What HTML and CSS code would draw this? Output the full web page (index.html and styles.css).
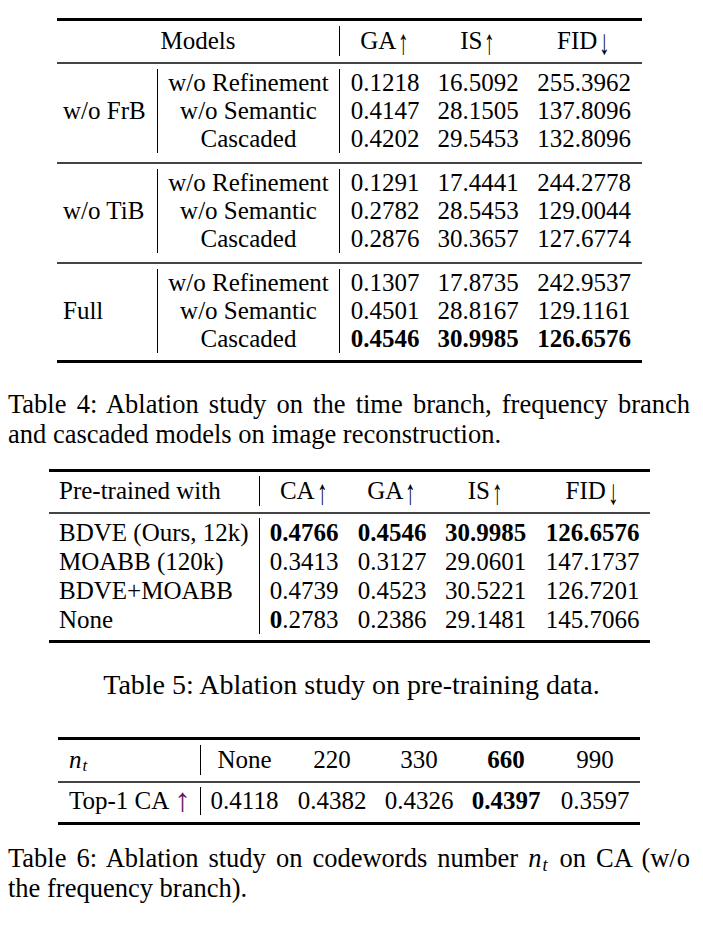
FILE: index.html
```html
<!DOCTYPE html>
<html>
<head>
<meta charset="utf-8">
<link rel="stylesheet" href="styles.css">
</head>
<body>
<div class="page">

  <div class="tbl t4">
    <div class="head g4">
      <div class="cell models vr">Models</div>
      <div class="cell">GA<span class="arr">↑</span></div>
      <div class="cell">IS<span class="arr">↑</span></div>
      <div class="cell">FID<span class="arr">↓</span></div>
    </div>
    <div class="grp g4">
      <div class="cell glabel vr">w/o FrB</div>
      <div class="cell vr">w/o Refinement</div><div class="cell">0.1218</div><div class="cell">16.5092</div><div class="cell">255.3962</div>
      <div class="cell vr">w/o Semantic</div><div class="cell">0.4147</div><div class="cell">28.1505</div><div class="cell">137.8096</div>
      <div class="cell vr">Cascaded</div><div class="cell">0.4202</div><div class="cell">29.5453</div><div class="cell">132.8096</div>
    </div>
    <div class="grp g4">
      <div class="cell glabel vr">w/o TiB</div>
      <div class="cell vr">w/o Refinement</div><div class="cell">0.1291</div><div class="cell">17.4441</div><div class="cell">244.2778</div>
      <div class="cell vr">w/o Semantic</div><div class="cell">0.2782</div><div class="cell">28.5453</div><div class="cell">129.0044</div>
      <div class="cell vr">Cascaded</div><div class="cell">0.2876</div><div class="cell">30.3657</div><div class="cell">127.6774</div>
    </div>
    <div class="grp g4 last">
      <div class="cell glabel vr">Full</div>
      <div class="cell vr">w/o Refinement</div><div class="cell">0.1307</div><div class="cell">17.8735</div><div class="cell">242.9537</div>
      <div class="cell vr">w/o Semantic</div><div class="cell">0.4501</div><div class="cell">28.8167</div><div class="cell">129.1161</div>
      <div class="cell vr">Cascaded</div><div class="cell"><b>0.4546</b></div><div class="cell"><b>30.9985</b></div><div class="cell"><b>126.6576</b></div>
    </div>
  </div>
  <div class="caption c4">
    <div class="line just">Table 4: Ablation study on the time branch, frequency branch</div>
    <div class="line">and cascaded models on image reconstruction.</div>
  </div>

  <div class="tbl t5">
    <div class="head g5">
      <div class="cell left vr">Pre-trained with</div>
      <div class="cell">CA<span class="arr">↑</span></div>
      <div class="cell">GA<span class="arr">↑</span></div>
      <div class="cell">IS<span class="arr">↑</span></div>
      <div class="cell">FID<span class="arr">↓</span></div>
    </div>
    <div class="body5 g5">
      <div class="cell left vr">BDVE (Ours, 12k)</div><div class="cell"><b>0.4766</b></div><div class="cell"><b>0.4546</b></div><div class="cell"><b>30.9985</b></div><div class="cell"><b>126.6576</b></div>
      <div class="cell left vr">MOABB (120k)</div><div class="cell">0.3413</div><div class="cell">0.3127</div><div class="cell">29.0601</div><div class="cell">147.1737</div>
      <div class="cell left vr">BDVE+MOABB</div><div class="cell">0.4739</div><div class="cell">0.4523</div><div class="cell">30.5221</div><div class="cell">126.7201</div>
      <div class="cell left vr">None</div><div class="cell"><b>0</b>.2783</div><div class="cell">0.2386</div><div class="cell">29.1481</div><div class="cell">145.7066</div>
    </div>
  </div>
  <div class="caption c5">Table 5: Ablation study on pre-training data.</div>

  <div class="tbl t6">
    <div class="head g6">
      <div class="cell left vr"><span class="math"><i>n</i><sub>t</sub></span></div>
      <div class="cell">None</div>
      <div class="cell">220</div>
      <div class="cell">330</div>
      <div class="cell"><b>660</b></div>
      <div class="cell">990</div>
    </div>
    <div class="body6 g6">
      <div class="cell left vr">Top-1 CA <span class="arrp">↑</span></div>
      <div class="cell">0.4118</div>
      <div class="cell">0.4382</div>
      <div class="cell">0.4326</div>
      <div class="cell"><b>0.4397</b></div>
      <div class="cell">0.3597</div>
    </div>
  </div>
  <div class="caption c6">
    <div class="line just">Table 6: Ablation study on codewords number <span class="math"><i>n</i><sub>t</sub></span> on CA (w/o</div>
    <div class="line">the frequency branch).</div>
  </div>

</div>
</body>
</html>
```

FILE: styles.css
```css
html, body {
  margin: 0;
  padding: 0;
  background: #fff;
}
body {
  font-family: "Liberation Serif", "Times New Roman", serif;
  font-size: 25px;
  color: #000;
}
.page {
  width: 703px;
  padding-top: 18px;
}
.tbl {
  border-top: 3px solid #000;
  border-bottom: 3px solid #000;
}
.cell {
  text-align: center;
  white-space: nowrap;
}
.cell.left {
  text-align: left;
}
.vr {
  border-right: 1px solid #000;
}
b {
  font-weight: bold;
}
.math {
  display: inline-block;
  padding-right: 2px;
}
.math i {
  font-style: italic;
}
.math sub {
  font-style: italic;
  font-size: 0.68em;
  vertical-align: -0.2em;
  line-height: 0;
  margin-left: 1px;
}
.arr {
  display: inline-block;
  transform: scale(0.85, 1.4) translateY(1px);
  margin-left: 1px;
}
.arrp {
  color: #5e1560;
  font-size: 33px;
  line-height: 0;
  vertical-align: -2px;
}

/* Table 4 */
.t4 {
  margin-left: 57px;
  width: 585px;
}
.g4 {
  display: grid;
  grid-template-columns: 101px 182px 90px 96px 116px;
}
.t4 .head {
  padding: 5px 0 6px;
  line-height: 30px;
  border-bottom: 2px solid #444;
}
.t4 .models {
  grid-column: span 2;
}
.t4 .grp {
  padding: 5px 0 9px;
  line-height: 28px;
  border-bottom: 2px solid #444;
}
.t4 .grp.last {
  border-bottom: none;
  padding-bottom: 7px;
}
.t4 .glabel {
  grid-row: span 3;
  display: flex;
  align-items: center;
  padding-left: 6px;
  text-align: left;
}

.caption {
  margin: 0;
  line-height: 30px;
  font-size: 26.5px;
}
.c4, .c6 {
  margin-left: 8px;
  width: 682px;
}
.line {
  white-space: nowrap;
}
.line.just {
  text-align: justify;
  text-align-last: justify;
}
.c4 {
  margin-top: 26px;
}

/* Table 5 */
.t5 {
  margin-top: 20px;
  margin-left: 49px;
  width: 601px;
}
.g5 {
  display: grid;
  grid-template-columns: 211px 88px 88px 99px 115px;
}
.g5 .left {
  padding-left: 10px;
}
.t5 .head {
  padding: 4px 0 6px;
  line-height: 30px;
  border-bottom: 2px solid #444;
}
.t5 .body5 {
  padding: 4px 0 6px;
  line-height: 29px;
}
.c5 {
  margin-top: 27px;
  text-align: center;
  font-size: 28px;
}

/* Table 6 */
.t6 {
  margin-top: 37px;
  margin-left: 58px;
  width: 582px;
}
.g6 {
  display: grid;
  grid-template-columns: 143px 87px 88px 86px 88px 90px;
}
.g6 .left {
  padding-left: 11px;
}
.t6 .head {
  padding: 5px 0 6px;
  line-height: 30px;
  border-bottom: 2px solid #444;
}
.t6 .body6 {
  padding: 4px 0 7px;
  line-height: 28px;
}
.c6 {
  margin-top: 18px;
}
```
